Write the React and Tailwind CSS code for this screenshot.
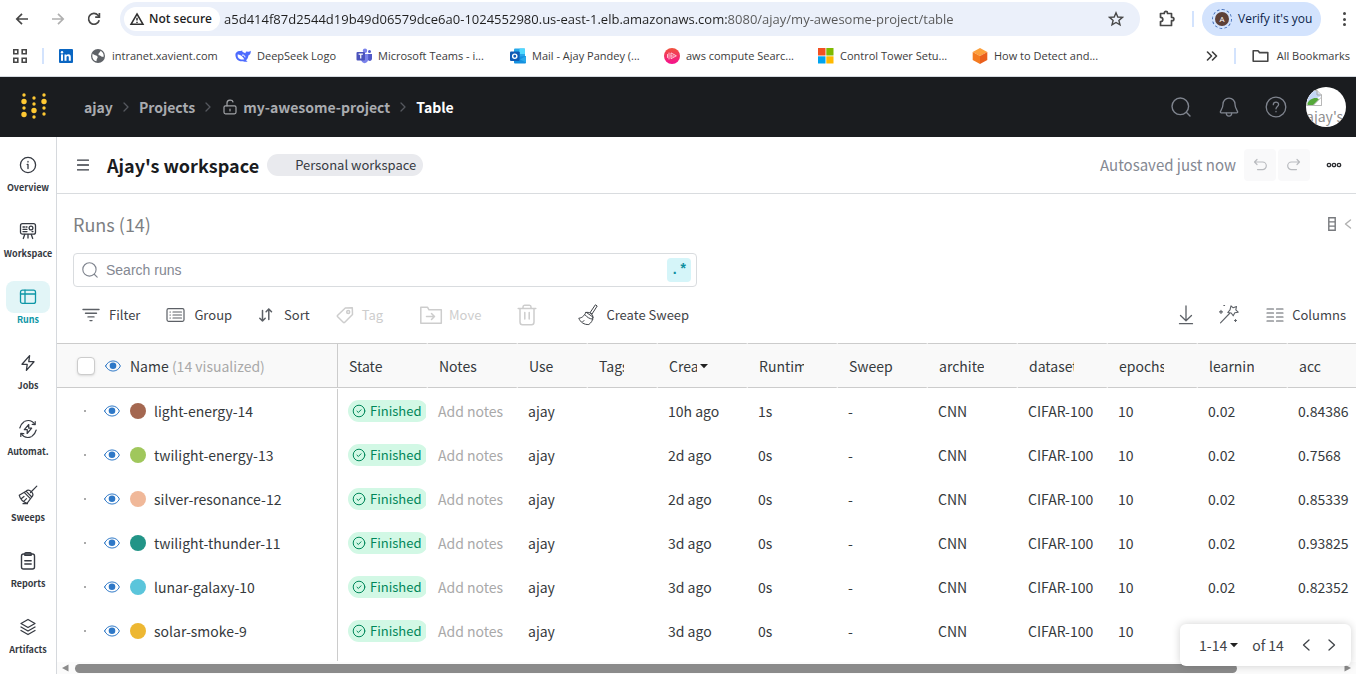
import React from "react";

const Svg = ({ size = 20, w, h, box, sw = 1, className = "", children }) => (
  <svg
    width={w || size}
    height={h || size}
    viewBox={box || `0 0 ${w || size} ${h || size}`}
    fill="none"
    stroke="currentColor"
    strokeWidth={sw}
    strokeLinecap="round"
    strokeLinejoin="round"
    className={`shrink-0 ${className}`}
    aria-hidden="true"
  >
    {children}
  </svg>
);

/* ---------- browser icons ---------- */

const BackIcon = () => (
  <Svg size={16} sw={1.7} className="text-[#474747]">
    <path d="M14 8H3M8 2.8L2.8 8L8 13.2" strokeLinecap="butt" strokeLinejoin="miter" />
  </Svg>
);
const ForwardIcon = () => (
  <Svg size={16} sw={1.7} className="text-[#b0b0b0]">
    <path d="M2 8H13M8 2.8L13.2 8L8 13.2" strokeLinecap="butt" strokeLinejoin="miter" />
  </Svg>
);
const ReloadIcon = () => (
  <Svg size={16} sw={1.7} className="text-[#474747]">
    <path d="M13.2 9.2A5.4 5.4 0 1 1 12 4.2L13.4 5.8" strokeLinecap="butt" />
    <path d="M13.4 2V6.2H9.2" strokeLinecap="butt" strokeLinejoin="miter" />
  </Svg>
);
const WarnIcon = () => (
  <Svg size={16} sw={1.5} className="text-[#303030]">
    <path d="M8 3L14 13.3H2Z" strokeLinejoin="miter" />
    <path d="M8 6.8V9.6M8 10.8V12" strokeLinecap="butt" />
  </Svg>
);
const StarIcon = () => (
  <Svg size={16} sw={1.4} className="text-[#474747]">
    <path d="M8 1.8L9.8 6L14.4 6.4L10.9 9.4L12 13.9L8 11.5L4 13.9L5.1 9.4L1.6 6.4L6.2 6Z" strokeLinejoin="miter" />
  </Svg>
);
const PuzzleIcon = () => (
  <Svg size={18} sw={1.7} className="text-[#474747]">
    <path d="M2.5 3.5H6.3V3A1.6 1.6 0 0 1 9.5 3V3.5H13.5V7.3H14.2A1.6 1.6 0 0 1 14.2 10.7H13.5V15.5H2.5V11.5C5.6 11.5 5.6 7.3 2.5 7.3Z" />
  </Svg>
);
const AppsIcon = () => (
  <Svg size={16} sw={1.6} className="text-[#474747]">
    <path d="M1.8 1.8h4v4h-4zM10.200 1.800h4v4h-4zM1.800 10.200h4v4h-4zM10.200 10.200h4v4h-4z" strokeLinejoin="miter" />
  </Svg>
);
const LinkedInIcon = () => (
  <Svg size={16} className="text-white">
    <rect x="1" y="1" width="14" height="14" rx="1" fill="#0a66c2" stroke="none" />
    <rect x="3" y="6.4" width="2" height="6.4" fill="#fff" stroke="none" />
    <circle cx="4" cy="4.3" r="1.2" fill="#fff" stroke="none" />
    <path d="M6.5 6.4h1.9v.9c.4-.7 1.1-1.1 2-1.1 1.9 0 2.4 1.2 2.4 3v3.6h-2V9.6c0-.9-.1-1.7-1.1-1.7s-1.2.8-1.2 1.6v3.3h-2z" fill="#fff" stroke="none" />
  </Svg>
);
const GlobeIcon = () => (
  <Svg size={16}>
    <circle cx="8" cy="8" r="7" fill="#5f6368" stroke="none" />
    <path d="M2.6 5.5C4 7.600 7 6.800 7.600 8.800C8 10.400 6.400 10.200 6.600 13.300C4 12.900 2.200 10.400 2.300 8ZM6.500 2.500L10.500 2.800C10.500 4.600 8.600 4.600 8.400 6.200C8.400 8 11 7 11.600 8.800H13.700C14 6 12.500 3.700 10.500 2.800Z" fill="#fff" stroke="none" />
  </Svg>
);
const WhaleIcon = () => (
  <Svg size={16}>
    <path d="M0.4 6.8C0.4 4.6 2.6 2.7 5.4 3.1L7.3 2.6L7.4 3.8C8.8 4.6 9.8 5.2 10.8 5.3C10.3 4 11 3.2 12.2 3.6C13 4 14.5 4 15.7 2.8C16 5 15.2 6.8 13.4 7.5C13.3 9.8 12 11.6 11 12.3L12.6 13.6C9.6 14.2 8.4 13.3 7.4 13.3C3.4 13.8 0.4 10.8 0.4 6.8Z" fill="#4d6bfe" stroke="none" />
    <path d="M2.6 6.600C5 6 7.600 8.400 9.300 11.200C7.400 12 4 11.400 2.800 8.900Z" fill="#fff" stroke="none" />
    <path d="M7.300 7.100C8.300 6.500 9.700 7.300 10 8.900" stroke="#fff" />
  </Svg>
);
const TeamsIcon = () => (
  <Svg size={16}>
    <circle cx="9" cy="2.8" r="2.2" fill="#7b83eb" stroke="none" />
    <circle cx="13.5" cy="3.6" r="1.5" fill="#5059c9" stroke="none" />
    <path d="M11 6H16V10.5C16 13.6 12 13.6 11.6 11Z" fill="#5059c9" stroke="none" />
    <path d="M5 6H12.2V11C12.2 16.5 5 16.5 5 11Z" fill="#7b83eb" stroke="none" />
    <rect x="0.5" y="4" width="8.5" height="8.5" rx="1" fill="#4b53bc" stroke="none" />
    <path d="M2.6 6.2H6.9M4.75 6.2V10.5" stroke="#fff" strokeWidth="1.2" strokeLinecap="butt" />
  </Svg>
);
const OutlookIcon = () => (
  <Svg size={16}>
    <rect x="4" y="0.5" width="11" height="11" rx="1" fill="#28a8ea" stroke="none" />
    <path d="M9.5 0.5H15V6H9.5Z" fill="#50d9ff" stroke="none" />
    <path d="M4 4H9.5V8H4Z" fill="#0364b8" stroke="none" />
    <path d="M4 9L16 8V14.5Q16 15.5 15 15.5H5Q4 15.5 4 14.5Z" fill="#1490df" stroke="none" />
    <path d="M16 8V14.5L10 11.5Z" fill="#28a8ea" stroke="none" />
    <rect x="0" y="3.5" width="9.5" height="9.5" rx="1" fill="#0f5bb5" stroke="none" />
    <circle cx="4.75" cy="8.25" r="2.1" stroke="#fff" strokeWidth="1.4" />
  </Svg>
);
const AwsSearchIcon = () => (
  <Svg size={16}>
    <defs>
      <linearGradient id="pinkred" x1="0" y1="0" x2="0" y2="1">
        <stop offset="0" stopColor="#f0533c" />
        <stop offset="1" stopColor="#f5108f" />
      </linearGradient>
    </defs>
    <circle cx="8" cy="8" r="8" fill="url(#pinkred)" stroke="none" />
    <path d="M5 5V11M7 5.3V10.7L12 8ZM3.5 6.5V9.5" stroke="#ffd5dc" strokeWidth="0.9" />
    <path d="M7 8H10" stroke="#ffd5dc" strokeWidth="0.8" />
  </Svg>
);
const WindowsIcon = () => (
  <Svg size={16}>
    <path d="M0 0h7.500v7.500H0z" fill="#f25022" stroke="none" />
    <path d="M8.300 0h7.200v7.500H8.300z" fill="#7fba00" stroke="none" />
    <path d="M0 8.300h7.500v7.200H0z" fill="#00a4ef" stroke="none" />
    <path d="M8.300 8.300h7.200v7.200H8.300z" fill="#ffb900" stroke="none" />
  </Svg>
);
const CubeIcon = () => (
  <Svg size={16}>
    <path d="M8 0L15.300 4L8 8L0.700 4Z" fill="#fda03c" stroke="none" />
    <path d="M0.700 4L8 8V16L0.700 12Z" fill="#f47b20" stroke="none" />
    <path d="M15.300 4L8 8V16L15.300 12Z" fill="#ea5f1c" stroke="none" />
  </Svg>
);
const FolderIcon = () => (
  <Svg size={18} sw={1.6} className="text-[#474747]">
    <path d="M2.200 3.800H7L8.600 5.600H16.800V14.200H2.200Z" />
  </Svg>
);

/* ---------- app icons ---------- */

const LogoDots = () => (
  <Svg w={28} h={30}>
    <g fill="#ffc933" stroke="none">
      <circle cx="4" cy="3" r="1.7" />
      <circle cx="4" cy="9.500" r="2.700" />
      <circle cx="4" cy="16" r="1.700" />
      <circle cx="4" cy="22.500" r="2.700" />
      <circle cx="14" cy="6" r="1.700" />
      <circle cx="14" cy="12" r="1.700" />
      <circle cx="14" cy="18.500" r="2.700" />
      <circle cx="14" cy="25" r="1.700" />
      <circle cx="24" cy="3" r="1.700" />
      <circle cx="24" cy="9.500" r="2.700" />
      <circle cx="24" cy="16" r="1.700" />
      <circle cx="24" cy="22" r="1.700" />
    </g>
  </Svg>
);
const Crumb = () => (
  <Svg w={6} h={10} sw={1.3} className="text-[#55585e]">
    <path d="M1 1L5 5L1 9" />
  </Svg>
);
const LockOpenIcon = () => (
  <Svg w={14} h={16} sw={1.2} className="text-[#a2a4a8]">
    <rect x="1" y="6.800" width="12" height="8" rx="1.500" />
    <path d="M4 6.800V4C4 0.300 9.400 0.200 10 3M7 10V12" />
  </Svg>
);
const SearchIcon = ({ size = 20, className }) => (
  <Svg size={size} box="0 0 20 20" sw={1.4} className={className}>
    <circle cx="9.300" cy="9.300" r="8.300" />
    <path d="M15.300 15.300L19 19" />
  </Svg>
);
const BellIcon = () => (
  <Svg size={20} sw={1.3} className="text-[#7f848e]">
    <path d="M10 1.200C6.400 1.200 4 3.800 4 7.200C4 11.500 1.300 13.800 1.300 15C1.300 15.600 1.700 15.800 2.200 15.800H17.800C18.300 15.800 18.700 15.600 18.700 15C18.700 13.800 16 11.500 16 7.200C16 3.800 13.600 1.200 10 1.200Z" />
    <path d="M7.300 16.200C7.400 20 12.600 20 12.700 16.200" />
  </Svg>
);
const HelpIcon = () => (
  <Svg size={22} sw={1.3} className="text-[#7f848e]">
    <circle cx="11" cy="11" r="9.800" />
    <path d="M8.300 8.700C8.400 5.200 13.700 5.300 13.600 8.500C13.500 10.400 11 10.500 11 12.800M11 15.400V15.800" />
  </Svg>
);
const BrokenImage = () => (
  <Svg size={16}>
    <path d="M1 0.500H11L15.500 5V15.500H1Z" fill="#fff" stroke="#b8b8b8" />
    <path d="M1.500 1H10.500L15 6L1.500 13Z" fill="#c4d6f4" stroke="none" />
    <path d="M1.500 13.500C3 9.500 8 7 12 8.500L13 9.500L7.500 15H1.500Z" fill="#55a83a" stroke="none" />
    <path d="M15.500 7.500V15.500H7.500Z" fill="#fff" stroke="#b8b8b8" />
    <path d="M11 0.500V5H15.500" stroke="#a8a8a8" />
  </Svg>
);

const InfoIcon = () => (
  <Svg size={18} sw={1.3}>
    <circle cx="9" cy="9" r="7.600" />
    <path d="M9 8.400V12.500M9 5.500V6M8.200 8.400H9" />
  </Svg>
);
const WorkspaceIcon = () => (
  <Svg size={18} sw={1.3}>
    <rect x="1.500" y="1.700" width="15" height="10.500" rx="2" />
    <circle cx="12" cy="6" r="1.900" />
    <path d="M4 5H5.500M7 5H8M4 7.300H8M4 9.600H8M13 9.600H14M5.800 12.300L4.300 16.500M12.200 12.300L13.700 16.500M9 12.300V16" />
  </Svg>
);
const RunsIcon = () => (
  <Svg size={18} sw={1.3}>
    <rect x="1.500" y="2.200" width="15" height="13.200" rx="2" />
    <path d="M1.500 6H16.500M6 2.200V15.400" />
  </Svg>
);
const BoltIcon = () => (
  <Svg size={18} sw={1.3}>
    <path d="M10.600 1.600L3 10.300H8.200L7.400 16.400L15 7.700H9.800Z" />
  </Svg>
);
const AutomatIcon = () => (
  <Svg size={20} sw={1.2}>
    <path d="M10.800 5.500L6.300 10.700H9.300L9.100 14.500L13.700 9.200H10.700Z" />
    <path d="M1.800 9C2.600 6.200 4 4.200 5.800 3M6.800 2.300C10.500 0.800 14.500 1.900 16.800 5.300M18.200 11C17.400 13.800 16 15.800 14.200 17M13.200 17.700C9.500 19.200 5.500 18.100 3.200 14.700" />
    <path d="M17.200 2.600V5.600L14.200 5.400M2.800 17.400V14.400L5.800 14.600" />
  </Svg>
);
const SweepsIcon = () => (
  <Svg size={20} sw={1.2}>
    <path d="M18.800 1.200L12.500 7.500M8 6.200L13.800 12C15.600 10.300 15 8.300 13.400 6.600C11.700 4.900 9.700 4.500 8 6.200ZM8 6.200L1.200 10.200C2 13.500 5 17 9 18.300L13.800 12M6.200 7.400L12.400 13.700M3.500 13.500L6 11.500M6 16.200L8.500 13.700M5 18.700H9.500" />
  </Svg>
);
const ReportsIcon = () => (
  <Svg size={18} sw={1.4}>
    <rect x="2.500" y="2" width="13" height="15" rx="2" />
    <path d="M5.800 2C5.800 0.700 6.300 0.800 7 0.800H11C11.700 0.800 12.200 0.700 12.200 2V3.200H5.800ZM5.800 8.700H12.200M5.800 12H12.200" />
  </Svg>
);
const ArtifactsIcon = () => (
  <Svg size={18} sw={1.3}>
    <path d="M9 1.500L16 5.500L9 9.500L2 5.500ZM2 9L9 13L16 9M2 12.500L9 16.500L16 12.500" />
  </Svg>
);

const FilterIcon = () => (
  <Svg w={18} h={14} sw={1.4}>
    <path d="M1 1.500H17M3.500 5.200H14.500M6 8.900H12M8 12.600H10" />
  </Svg>
);
const GroupIcon = () => (
  <Svg w={20} h={14} sw={1.2}>
    <rect x="1" y="0.700" width="17" height="12.600" rx="1.500" />
    <path d="M4 4H4.400M7 4H15.500M4 7H4.400M7 7H15.500M4 10H4.400M7 10H15.500" />
  </Svg>
);
const SortIcon = () => (
  <Svg size={16} sw={1.5}>
    <path d="M4.500 3.500V14M1.800 11.200L4.500 14L7.200 11.200M10.800 12.500V2M8.100 4.800L10.800 2L13.500 4.800" />
  </Svg>
);
const TagIcon = () => (
  <Svg size={18} sw={1.5}>
    <path d="M9.300 2L16.300 1.700L16.500 8.500L8.800 16.300Q8 17 7.200 16.300L1.700 10.800Q1 10 1.700 9.300Z" />
    <circle cx="12.200" cy="6" r="1.500" />
  </Svg>
);
const MoveIcon = () => (
  <Svg w={24} h={20} sw={1.5}>
    <path d="M1.800 18.200V2.300H8.600L10 4.800H22.300V18.200ZM7.500 11.500H15.500M12.500 8.500L15.500 11.500L12.500 14.500" />
  </Svg>
);
const TrashIcon = () => (
  <Svg w={20} h={22} sw={1.5}>
    <path d="M1.200 4.500H18.800M6 4.500V3Q6 1.200 7.500 1.200H12.500Q14 1.200 14 3V4.500M3 4.500V18Q3 20.800 5.500 20.800H14.500Q17 20.800 17 18V4.500M7.800 8.500V15M12.200 8.500V15" />
  </Svg>
);
const BroomIcon = () => (
  <Svg size={22} sw={1}>
    <path d="M18.700 1L20.200 2L15 10L13.300 9ZM8.800 8.500C12 7.500 16.300 9.800 16 13.500M8.800 8.500C7.200 12.300 4.600 14 1.800 14.200C3.200 18 7.200 21 11.800 20.500C14.200 18.800 15.800 16.500 16 13.500ZM8 10.800C10.200 13.500 12.600 14.800 15.800 15.200M5.500 18L7 16.500" />
  </Svg>
);
const DownloadIcon = () => (
  <Svg w={16} h={20} sw={1.3}>
    <path d="M8 1V15.500M2.500 10.500L8 15.800L13.500 10.500M1.500 18.700H14.500" />
  </Svg>
);
const WandIcon = () => (
  <Svg size={22} sw={1.1}>
    <path d="M2.500 18.800L11.500 9.500M13 1.800L15.200 3.800L18.500 2.500L17.800 5.800L20.200 8.200L16.800 8.800L15.200 11.800L13.200 9L9.800 8.500L12 5.800Z" />
    <path d="M3 6.400V9.400M1.500 7.900H4.500M17.500 15.500V17.500M16.500 16.500H18.500M5.800 1.500H6.600" />
  </Svg>
);
const ColumnsIcon = () => (
  <Svg w={18} h={14} sw={1.2}>
    <path d="M1 1H7.500M1 5H7.500M1 9H7.500M1 13H7.500M10.500 1H17M10.500 5H17M10.500 9H17M10.500 13H17" />
  </Svg>
);
const EyeIcon = () => (
  <Svg w={16} h={12} className="text-[#2e78c7]">
    <path d="M0.600 6C3.500-0.800 12.500-0.800 15.400 6C12.500 12.800 3.500 12.800 0.600 6Z" />
    <circle cx="8" cy="5.800" r="3.300" fill="currentColor" stroke="none" />
  </Svg>
);
const CheckCircle = () => (
  <Svg size={14}>
    <circle cx="7" cy="7" r="5.800" />
    <path d="M5 7.200L6.400 8.500L9 5.800" />
  </Svg>
);
const UndoIcon = () => (
  <Svg size={14} sw={1.2}>
    <path d="M4 1.500L1.500 4L4 6.500M1.500 4H9.500A3.800 3.800 0 0 1 9.500 11.600H4.500" />
  </Svg>
);
const RedoIcon = () => (
  <Svg size={14} sw={1.2}>
    <path d="M10 1.500L12.500 4L10 6.500M12.500 4H4.500A3.800 3.800 0 0 0 4.500 11.600H9.500" />
  </Svg>
);

/* ---------- data ---------- */

const bookmarks = [
  ["intranet.xavient.com", GlobeIcon, "w-[145px]"],
  ["DeepSeek Logo", WhaleIcon, "w-[121px]"],
  ["Microsoft Teams - i...", TeamsIcon, "w-[154px]"],
  ["Mail - Ajay Pandey (...", OutlookIcon, "w-[154px]"],
  ["aws compute Searc...", AwsSearchIcon, "w-[154px]"],
  ["Control Tower Setu...", WindowsIcon, "w-[154px]"],
  ["How to Detect and...", CubeIcon, "w-[154px]"],
];

const nav = [
  ["Overview", InfoIcon],
  ["Workspace", WorkspaceIcon],
  ["Runs", RunsIcon],
  ["Jobs", BoltIcon],
  ["Automat.", AutomatIcon],
  ["Sweeps", SweepsIcon],
  ["Reports", ReportsIcon],
  ["Artifacts", ArtifactsIcon],
];

const columns = [
  ["State", 90],
  ["Notes", 90],
  ["User", 70],
  ["Tags", 70],
  ["Created", 90],
  ["Runtime", 90],
  ["Sweep", 90],
  ["architecture", 90],
  ["dataset", 90],
  ["epochs", 90],
  ["learning_rate", 90],
  ["acc", 90],
];

const runs = [
  ["light-energy-14", "#a46750", "10h ago", "1s", "0.02", "0.84386"],
  ["twilight-energy-13", "#a0c75c", "2d ago", "0s", "0.02", "0.7568"],
  ["silver-resonance-12", "#f0b899", "2d ago", "0s", "0.02", "0.85339"],
  ["twilight-thunder-11", "#229487", "3d ago", "0s", "0.02", "0.93825"],
  ["lunar-galaxy-10", "#5bc5db", "3d ago", "0s", "0.02", "0.82352"],
  ["solar-smoke-9", "#edb732", "3d ago", "0s", "", ""],
];

/* ---------- sections ---------- */

function BrowserBar() {
  return (
    <div className="shrink-0 border-b border-[#d5dae0] bg-white font-['Open_Sans',sans-serif] text-[#3c3c3c]">
      <div className="flex h-[38px] items-center">
        <div className="flex items-center gap-5 pl-[14px]">
          <button aria-label="Back"><BackIcon /></button>
          <button aria-label="Forward"><ForwardIcon /></button>
          <button aria-label="Reload"><ReloadIcon /></button>
        </div>
        <div className="ml-[18px] flex h-[34px] flex-1 items-center rounded-full bg-[#ebf0fa] px-1">
          <button className="flex h-6 items-center gap-1 rounded-full bg-white pr-2 pl-[5px] text-xs font-semibold text-[#1f1f1f]">
            <WarnIcon />
            Not secure
          </button>
          <input
            aria-label="Address"
            readOnly
            value="a5d414f87d2544d19b49d06579dce6a0-1024552980.us-east-1.elb.amazonaws.com:8080/ajay/my-awesome-project/table"
            className="ml-1 min-w-0 flex-1 bg-[linear-gradient(90deg,#1f1f1f_503px,#555_503px)] bg-clip-text pt-px text-[13px] text-transparent outline-none"
          />
          <button aria-label="Bookmark this tab" className="mr-3"><StarIcon /></button>
        </div>
        <button aria-label="Extensions" className="ml-[18px]"><PuzzleIcon /></button>
        <span className="ml-4 h-4 w-0.5 bg-[#d3e3fd]" />
        <button className="ml-2 flex h-[34px] w-[119px] items-center gap-[6px] rounded-full bg-[#d3e3fd] pl-[10px] text-xs whitespace-nowrap text-[#0b1f4a]">
          <span className="flex size-5 shrink-0 items-center justify-center rounded-full border border-dashed border-[#3b68b5]">
            <span className="flex size-[14px] items-center justify-center rounded-full bg-[#5d4037] text-[8px] text-white">A</span>
          </span>
          Verify it's you
        </button>
        <button aria-label="Menu" className="ml-3 flex h-4 w-[23px] flex-col items-center justify-between py-px">
          <span className="size-[3px] rounded-full bg-[#474747]" />
          <span className="size-[3px] rounded-full bg-[#474747]" />
          <span className="size-[3px] rounded-full bg-[#474747]" />
        </button>
      </div>
      <div className="flex h-[38px] items-center pb-[2px] text-[11px] whitespace-nowrap">
        <button aria-label="Apps" className="ml-3"><AppsIcon /></button>
        <span className="ml-[14px] h-4 w-0.5 bg-[#d3e3fd]" />
        <a href="#linkedin" aria-label="LinkedIn" className="mr-4 ml-[14px]"><LinkedInIcon /></a>
        {bookmarks.map(([label, Icon, width]) => (
          <a key={label} href="#bookmark" className={`flex items-center gap-[6px] ${width}`}>
            <Icon />
            {label}
          </a>
        ))}
        <div className="ml-auto flex items-center">
          <button aria-label="More bookmarks">
            <Svg w={12} h={10} sw={1.6}><path d="M1.5 1L5.5 5L1.5 9M6.5 1L10.5 5L6.500 9" /></Svg>
          </button>
          <span className="mr-[15px] ml-4 h-4 w-0.5 bg-[#d3e3fd]" />
          <button className="flex items-center gap-2 pr-[6px]">
            <FolderIcon />
            All Bookmarks
          </button>
        </div>
      </div>
    </div>
  );
}

function TopBar() {
  return (
    <header className="flex h-[60px] shrink-0 items-center bg-[#1a1c1f] text-sm font-bold text-[#a9abaf]">
      <a href="#home" aria-label="Home" className="ml-5"><LogoDots /></a>
      <nav className="ml-9 flex items-center gap-[10px]">
        <a href="#ajay">ajay</a>
        <Crumb />
        <a href="#projects">Projects</a>
        <Crumb />
        <a href="#project" className="ml-0.5 flex items-center gap-[6px]">
          <LockOpenIcon />
          my-awesome-project
        </a>
        <Crumb />
        <span className="text-white">Table</span>
      </nav>
      <div className="mr-[10px] ml-auto flex items-center">
        <button aria-label="Search"><SearchIcon className="text-[#7f848e]" /></button>
        <button aria-label="Notifications" className="ml-7"><BellIcon /></button>
        <button aria-label="Help" className="ml-[26px]"><HelpIcon /></button>
        <button aria-label="Account" className="ml-[19px] size-10 overflow-hidden rounded-full bg-white pt-0.5 text-left font-normal text-[#8f8f8f]">
          <BrokenImage />
          <span className="block leading-5 whitespace-nowrap">ajay's</span>
        </button>
      </div>
    </header>
  );
}

function Sidebar() {
  return (
    <nav className="flex w-[57px] shrink-0 flex-col gap-5 border-r border-[#d6d9dd] pt-3">
      {nav.map(([label, Icon]) => {
        const on = label === "Runs";
        return (
          <a
            key={label}
            href={`#${label}`}
            className={`flex flex-col items-center text-[9px] leading-[14px] font-bold ${on ? "text-[#0e97a7]" : "text-[#363a42]"}`}
          >
            <span className={`flex h-8 w-11 items-center justify-center rounded-lg ${on ? "bg-[#e2f5f7]" : ""}`}>
              <Icon />
            </span>
            {label}
          </a>
        );
      })}
    </nav>
  );
}

function WorkspaceHeader() {
  return (
    <div className="flex h-[57px] shrink-0 items-center border-b border-[#d9dcdf]">
      <button aria-label="Toggle menu" className="ml-5 text-[#363a42]">
        <Svg w={12} h={12} sw={1.3}><path d="M0.5 1.2H11.500M0.500 6H11.500M0.500 10.800H11.500" /></Svg>
      </button>
      <h1 className="ml-[18px] text-lg leading-6 font-bold text-[#1a1c1f]">Ajay's workspace</h1>
      <span className="ml-2 rounded-full bg-[#e9eaee] pr-[7px] pl-7 text-[13px] leading-[22px] text-[#363a42]">
        Personal workspace
      </span>
      <span className="ml-auto text-[15px] text-[#848892]">Autosaved just now</span>
      <button aria-label="Undo" className="ml-2 flex size-8 items-center justify-center rounded bg-[#f9f9fa] text-[#b9bbbf]"><UndoIcon /></button>
      <button aria-label="Redo" className="ml-0.5 flex size-8 items-center justify-center rounded bg-[#f9f9fa] text-[#b9bbbf]"><RedoIcon /></button>
      <button aria-label="More" className="mr-[14px] ml-4">
        <Svg w={16} h={6} sw={1.3} className="text-[#2b2d31]">
          <circle cx="3" cy="3" r="1.700" /><circle cx="8" cy="3" r="1.700" /><circle cx="13" cy="3" r="1.700" />
        </Svg>
      </button>
    </div>
  );
}

function Tools() {
  return (
    <div className="mt-2 flex h-10 items-center text-[13px] text-[#3f4348]">
      <button className="ml-[25px] flex items-center gap-[9px]"><span className="text-[#5c6066]"><FilterIcon /></span>Filter</button>
      <button className="ml-[26px] flex items-center gap-2"><span className="text-[#5c6066]"><GroupIcon /></span>Group</button>
      <button className="ml-[26px] flex items-center gap-[10px]"><span className="text-[#5c6066]"><SortIcon /></span>Sort</button>
      <button disabled className="ml-[26px] flex items-center gap-2 text-[#cdcdcd]"><TagIcon />Tag</button>
      <button disabled className="ml-9 flex items-center gap-[6px] text-[#cdcdcd]"><MoveIcon />Move</button>
      <button disabled aria-label="Delete" className="ml-9 text-[#cdcdcd]"><TrashIcon /></button>
      <button className="ml-10 flex items-center gap-[7px]"><BroomIcon />Create Sweep</button>
      <div className="mr-[10px] ml-auto flex items-center text-[#5c6066]">
        <button aria-label="Download"><DownloadIcon /></button>
        <button aria-label="Magic" className="ml-6"><WandIcon /></button>
        <button className="ml-[26px] flex items-center gap-2"><ColumnsIcon /><span className="text-[#3f4348]">Columns</span></button>
      </div>
    </div>
  );
}

function RunsTable() {
  return (
    <table className="w-[1321px] table-fixed border-separate border-spacing-0 text-left text-sm text-[#363a3d]">
      <colgroup>
        <col className="w-[281px]" />
        {columns.map(([name, width]) => (
          <col key={name} style={{ width }} />
        ))}
      </colgroup>
      <thead>
        <tr className="h-[45px] bg-[#f9f9f9]">
          <th className="border-y border-r border-[#ccc] p-0 font-normal">
            <div className="flex items-center pl-5">
              <input type="checkbox" aria-label="Select all runs" className="size-[18px] appearance-none rounded-sm border border-[#ccc] bg-white shadow-sm" />
              <button aria-label="Toggle visibility" className="mr-[9px] ml-[10px]"><EyeIcon /></button>
              Name&nbsp;<span className="text-[#a9a9a9]">(14 visualized)</span>
            </div>
          </th>
          {columns.map(([name]) => (
            <th key={name} className="border-y border-r-2 border-y-[#ccc] border-r-[#f9f9f9] p-0 pl-[11px] font-normal">
              <div className="mr-8 flex items-center">
                <span className={`block overflow-hidden whitespace-nowrap ${name === "Created" ? "w-7 shrink-0" : "w-full"}`}>{name}</span>
                {name === "Created" && (
                  <Svg w={10} h={6} className="ml-0.5 text-[#222]"><path d="M1 1H9L5 5.200Z" fill="currentColor" stroke="none" /></Svg>
                )}
              </div>
            </th>
          ))}
        </tr>
      </thead>
      <tbody className="before:block before:h-px">
        {runs.map(([name, color, created, runtime, rate, acc]) => (
          <tr key={name} className="h-11">
            <td className="border-r border-[#ccc] p-0">
              <div className="flex items-center pl-[27px]">
                <span className="size-0.5 bg-[#aaa]" />
                <button aria-label={`Toggle ${name}`} className="ml-[18px]"><EyeIcon /></button>
                <span className="mr-2 ml-[10px] size-4 rounded-full" style={{ backgroundColor: color }} />
                <a href="#run">{name}</a>
              </div>
            </td>
            <td className="p-0 pl-[10px]">
              <div className="w-[78px] overflow-hidden">
                <span className="flex h-[22px] w-20 items-center gap-1 rounded-full bg-[#d2f8e5] pl-1 text-[13px] text-[#00875a]">
                  <CheckCircle />
                  Finished
                </span>
              </div>
            </td>
            <td className="p-0 pl-[10px] whitespace-nowrap text-[#a9a9a9]">Add notes</td>
            <td className="p-0 pl-[10px]">ajay</td>
            <td className="p-0" />
            <td className="p-0 pl-[10px]">{created}</td>
            <td className="p-0 pl-[10px]">{runtime}</td>
            <td className="p-0 pl-[10px]">-</td>
            <td className="p-0 pl-[10px]">CNN</td>
            <td className="p-0 pl-[10px]">CIFAR-100</td>
            <td className="p-0 pl-[10px]">10</td>
            <td className="p-0 pl-[10px]">{rate}</td>
            <td className="p-0 pl-[10px]">{acc}</td>
          </tr>
        ))}
        <tr className="h-2">
          <td className="border-r border-[#ccc] p-0" />
        </tr>
      </tbody>
    </table>
  );
}

function Pager() {
  return (
    <div className="absolute right-[5px] bottom-2 flex h-[42px] w-[171px] items-center rounded-md bg-white pl-[19px] text-[14px] text-[#3f4348] shadow-[0_0_8px_rgba(0,0,0,0.18)]">
      <button className="flex items-center gap-0.5">
        1-14
        <Svg w={10} h={6} className="text-[#222]"><path d="M1 1H9L5 5.200Z" fill="currentColor" stroke="none" /></Svg>
      </button>
      <span className="ml-[13px]">of 14</span>
      <button aria-label="Previous page" className="ml-[18px]">
        <Svg w={8} h={12} sw={1.3}><path d="M7 1L1.500 6L7 11" /></Svg>
      </button>
      <button aria-label="Next page" className="ml-[18px]">
        <Svg w={8} h={12} sw={1.3}><path d="M1 1L6.500 6L1 11" /></Svg>
      </button>
    </div>
  );
}

export default function App() {
  return (
    <div className="flex h-screen flex-col overflow-hidden bg-white font-['Noto_Sans_CJK_SC',sans-serif]">
      <BrowserBar />
      <TopBar />
      <div className="flex min-h-0 flex-1">
        <Sidebar />
        <main className="relative flex min-w-0 flex-1 flex-col">
          <WorkspaceHeader />
          <div className="mt-[18px] flex items-center pr-1 pl-4">
            <h2 className="text-lg leading-6 text-[#7d7f83]">Runs (14)</h2>
            <button aria-label="Expand row height" className="mr-2 ml-auto text-[#77797d]">
              <Svg w={8} h={14} sw={1.4}><path d="M0.8 0.8H7.200V13.200H0.800ZM0.800 4.900H7.200M0.800 9.100H7.200" strokeLinejoin="miter" /></Svg>
            </button>
            <button aria-label="Collapse" className="text-[#b0b0b0]">
              <Svg w={8} h={10} sw={1.4}><path d="M6.500 1L1.500 5L6.500 9" /></Svg>
            </button>
          </div>
          <label className="mt-[17px] ml-4 flex h-[34px] w-[624px] shrink-0 items-center rounded border border-[#d9dcdf] pr-[5px] pl-2">
            <SearchIcon size={16} className="text-[#7f848e]" />
            <input
              type="text"
              aria-label="Search runs"
              placeholder="Search runs"
              className="ml-2 min-w-0 flex-1 font-['Liberation_Sans',sans-serif] text-sm outline-none placeholder:text-[#848892]"
            />
            <button className="flex size-6 items-center justify-center rounded bg-[#d5f5f9] font-['Liberation_Mono',monospace] text-sm font-bold text-[#0e8fa0]">.*</button>
          </label>
          <Tools />
          <div className="mt-2 min-h-0 flex-1 overflow-hidden">
            <RunsTable />
          </div>
          <div className="flex h-3 shrink-0 items-center bg-[#fbfbfb] px-1 text-[#8b8b8b]">
            <Svg w={8} h={8}><path d="M7.500 0.500V7.500L1 4Z" fill="currentColor" stroke="none" /></Svg>
            <div className="mx-[6px] flex-1">
              <div className="h-[9px] w-[92%] rounded-full bg-[#8b8b8b]" />
            </div>
            <Svg w={8} h={8}><path d="M0.500 0.500V7.500L7 4Z" fill="currentColor" stroke="none" /></Svg>
          </div>
          <Pager />
        </main>
      </div>
    </div>
  );
}
